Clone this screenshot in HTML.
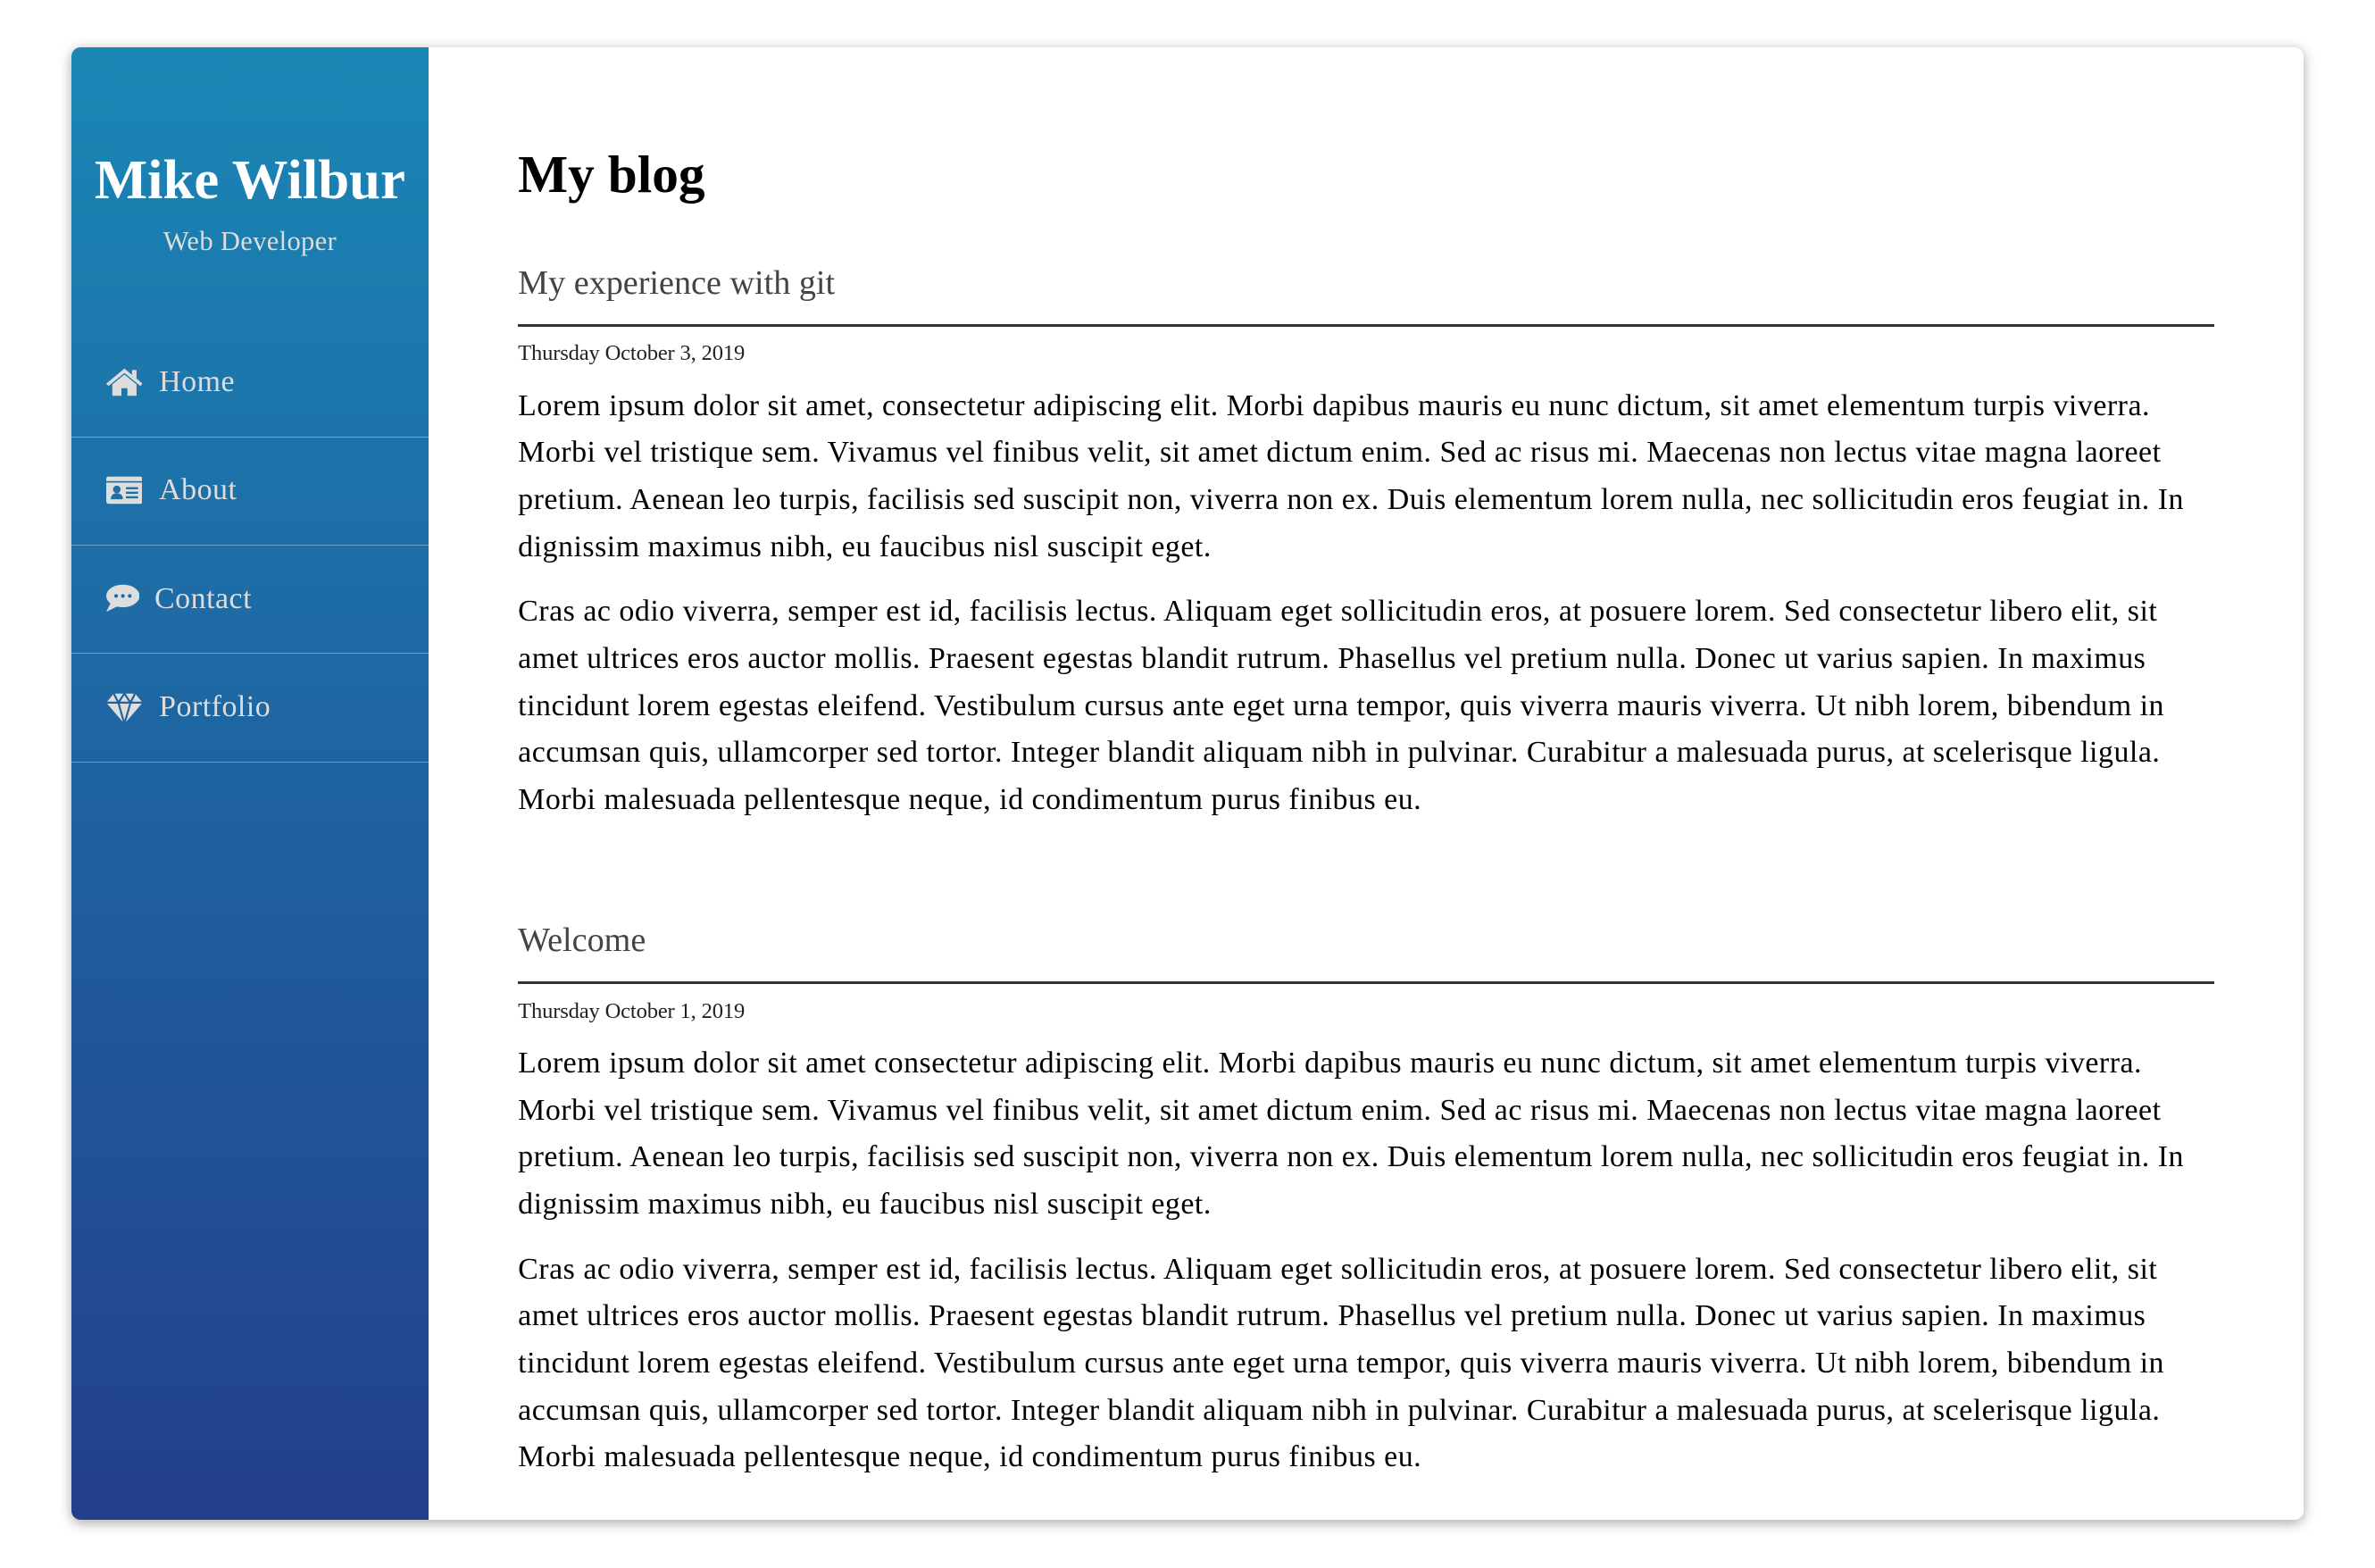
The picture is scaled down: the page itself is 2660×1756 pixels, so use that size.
<!DOCTYPE html>
<html><head><meta charset="utf-8"><style>
html,body{margin:0;padding:0;background:#fff;}
body{width:1568px;height:1035px;zoom:1.69643;font-family:"Liberation Serif","Times New Roman",serif;overflow:hidden;position:relative;}
.card{position:absolute;left:47px;top:31px;width:1474px;height:972px;border-radius:6px;box-shadow:0 2px 8px rgba(0,0,0,.35);overflow:hidden;background:#fff;}
.side{position:absolute;left:0;top:0;width:236px;height:100%;background:linear-gradient(to bottom,#1a87b5,#233f8b);}
.side h1{margin:0;position:absolute;top:66px;width:100%;text-align:center;color:#fff;font-size:37px;font-weight:bold;}
.side .sub{position:absolute;top:118px;width:100%;text-align:center;color:#ddd;font-size:18px;letter-spacing:0.2px;}
.nav{position:absolute;top:186px;left:0;width:100%;}
.nav div{height:71px;border-bottom:1px solid rgba(255,255,255,.35);position:relative;color:#ddd;font-size:20px;}
.nav svg{position:absolute;left:23px;top:25px;}
.nav span{position:absolute;left:58px;top:24px;letter-spacing:0.3px;}
.main{position:absolute;left:295px;top:0;width:1120px;}
.main h2{margin:0;position:absolute;top:64px;font-size:35px;font-weight:bold;}
.post{position:absolute;left:0;width:1120px;}
.post h3{margin:0;font-weight:normal;font-size:22.5px;color:#444;height:43px;line-height:32px;}
.post hr{margin:0;border:0;border-top:2px solid #333;}
.post .date{font-size:14.5px;color:#222;margin-top:9px;line-height:18px;letter-spacing:-0.1px;}
.post p{margin:10px 0 12px;font-size:20px;line-height:31px;color:#000;letter-spacing:0.3px;}
</style></head><body>
<div class="card">
 <div class="side">
  <h1>Mike Wilbur</h1>
  <div class="sub">Web Developer</div>
  <div class="nav">
   <div><svg width="24" height="20" viewBox="0 0 24 20"><path d="M12 1L0 11l1.5 1.5L12 4l10.5 8.5L24 11 20 7.7V2h-3v3.2z" fill="#ddd"/><path d="M4 11.5L12 5l8 6.5V19h-6v-5h-4v5H4z" fill="#ddd"/></svg><span>Home</span></div>
   <div><svg width="24" height="20" viewBox="0 0 24 20" style="top:25px"><rect x="0" y="1" width="24" height="18" rx="1.5" fill="#ddd"/><rect x="0" y="4" width="24" height="1" fill="#1d6fa5"/><circle cx="7" cy="9.5" r="2.5" fill="#1d6fa5"/><path d="M3 16c0-3 2-4 4-4s4 1 4 4z" fill="#1d6fa5"/><rect x="13" y="8" width="8" height="1.4" fill="#1d6fa5"/><rect x="13" y="11" width="8" height="1.4" fill="#1d6fa5"/><rect x="13" y="14" width="8" height="1.4" fill="#1d6fa5"/></svg><span>About</span></div>
   <div><svg width="22" height="20" viewBox="0 0 22 20"><ellipse cx="11" cy="8.5" rx="11" ry="7.5" fill="#ddd"/><path d="M3 13l-3 6 8-4z" fill="#ddd"/><circle cx="6.5" cy="8.5" r="1.2" fill="#1d68a3"/><circle cx="11" cy="8.5" r="1.2" fill="#1d68a3"/><circle cx="15.5" cy="8.5" r="1.2" fill="#1d68a3"/></svg><span style="left:55px">Contact</span></div>
   <div><svg width="24" height="22" viewBox="0 0 24 22"><path d="M5 1h14l5 6-12 14L0 7z" fill="#ddd"/><path d="M0 7h24M5 1l3 6 4-6 4 6 3-6M8 7l4 14 4-14" stroke="#1e62a0" stroke-width="1.3" fill="none"/></svg><span>Portfolio</span></div>
  </div>
 </div>
 <div class="main">
  <h2>My blog</h2>
  <div class="post" style="top:140px">
   <h3>My experience with git</h3>
   <hr>
   <div class="date">Thursday October 3, 2019</div>
   <p>Lorem ipsum dolor sit amet, consectetur adipiscing elit. Morbi dapibus mauris eu nunc dictum, sit amet elementum turpis viverra. Morbi vel tristique sem. Vivamus vel finibus velit, sit amet dictum enim. Sed ac risus mi. Maecenas non lectus vitae magna laoreet pretium. Aenean leo turpis, facilisis sed suscipit non, viverra non ex. Duis elementum lorem nulla, nec sollicitudin eros feugiat in. In dignissim maximus nibh, eu faucibus nisl suscipit eget.</p>
   <p>Cras ac odio viverra, semper est id, facilisis lectus. Aliquam eget sollicitudin eros, at posuere lorem. Sed consectetur libero elit, sit amet ultrices eros auctor mollis. Praesent egestas blandit rutrum. Phasellus vel pretium nulla. Donec ut varius sapien. In maximus tincidunt lorem egestas eleifend. Vestibulum cursus ante eget urna tempor, quis viverra mauris viverra. Ut nibh lorem, bibendum in accumsan quis, ullamcorper sed tortor. Integer blandit aliquam nibh in pulvinar. Curabitur a malesuada purus, at scelerisque ligula. Morbi malesuada pellentesque neque, id condimentum purus finibus eu.</p>
  </div>
  <div class="post" style="top:574px">
   <h3>Welcome</h3>
   <hr>
   <div class="date">Thursday October 1, 2019</div>
   <p>Lorem ipsum dolor sit amet consectetur adipiscing elit. Morbi dapibus mauris eu nunc dictum, sit amet elementum turpis viverra. Morbi vel tristique sem. Vivamus vel finibus velit, sit amet dictum enim. Sed ac risus mi. Maecenas non lectus vitae magna laoreet pretium. Aenean leo turpis, facilisis sed suscipit non, viverra non ex. Duis elementum lorem nulla, nec sollicitudin eros feugiat in. In dignissim maximus nibh, eu faucibus nisl suscipit eget.</p>
   <p>Cras ac odio viverra, semper est id, facilisis lectus. Aliquam eget sollicitudin eros, at posuere lorem. Sed consectetur libero elit, sit amet ultrices eros auctor mollis. Praesent egestas blandit rutrum. Phasellus vel pretium nulla. Donec ut varius sapien. In maximus tincidunt lorem egestas eleifend. Vestibulum cursus ante eget urna tempor, quis viverra mauris viverra. Ut nibh lorem, bibendum in accumsan quis, ullamcorper sed tortor. Integer blandit aliquam nibh in pulvinar. Curabitur a malesuada purus, at scelerisque ligula. Morbi malesuada pellentesque neque, id condimentum purus finibus eu.</p>
  </div>
 </div>
</div>
</body></html>
